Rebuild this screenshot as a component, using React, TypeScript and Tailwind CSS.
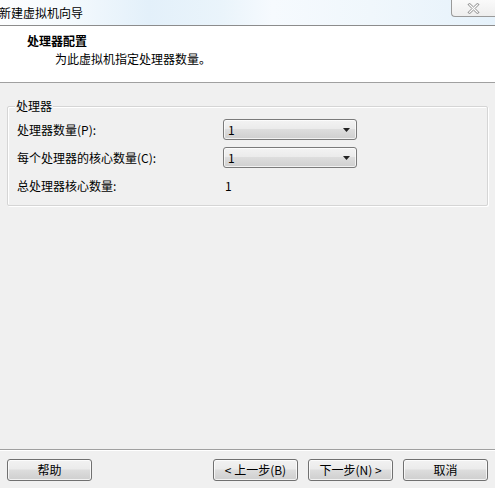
import React from "react";

const font = { fontFamily: '"Noto Sans CJK SC", "Liberation Sans", sans-serif' };

function Combo({ value }: { value: string }) {
  return (
    <div className="relative h-[21px] w-[134px] rounded-[3px] border border-[#7a7a7a] bg-[linear-gradient(180deg,#f3f3f3_0%,#ebebeb_45%,#dddddd_50%,#cfcfcf_100%)] flex items-center pl-[4px] pr-[6px] shadow-[inset_0_0_0_1px_rgba(255,255,255,0.7)]">
      <span className="flex-1 text-[12px] leading-none text-black">{value}</span>
      <svg width="7" height="4" viewBox="0 0 7 4">
        <path d="M0 0H7L3.5 4Z" fill="#222" />
      </svg>
    </div>
  );
}

function Btn({ children }: { children: React.ReactNode }) {
  return (
    <div className="h-[22px] w-[85px] rounded-[3px] border border-[#707070] bg-[linear-gradient(180deg,#f2f2f2_0%,#ebebeb_45%,#dddddd_50%,#cfcfcf_100%)] shadow-[inset_0_0_0_1px_rgba(255,255,255,0.75)] flex items-center justify-center text-[12px] leading-none text-black">
      {children}
    </div>
  );
}

export default function App() {
  return (
    <div className="w-[495px] h-[488px] flex flex-col bg-[#f0f0f0] overflow-hidden" style={font}>
      {/* title bar */}
      <div className="relative h-[26px] shrink-0 border-b border-[#8c8c8c] bg-[linear-gradient(90deg,#fdfeff_0%,#f3f9fd_15%,#e3f0fa_30%,#eaf4fb_45%,#f6fafe_55%,#f0f7fc_75%,#e6f2fb_100%)] flex items-center">
        <span className="text-[12px] leading-none text-black -ml-[1px]">新建虚拟机向导</span>
        <div className="absolute right-0 top-[-1px] h-[18px] w-[44px] rounded-bl-[4px] border border-[#9a9a9a] border-r-0 bg-[linear-gradient(180deg,#fafafa_0%,#eeeeee_100%)] flex items-center justify-center">
          <svg width="13" height="11" viewBox="0 0 13 11">
            <path
              d="M1 1.5L2.8 0.5L6.5 4L10.2 0.5L12 1.5L8 5.5L12 9.5L10.2 10.5L6.5 7L2.8 10.5L1 9.5L5 5.5Z"
              fill="#ffffff"
              stroke="#6b6b6b"
              strokeWidth="0.8"
              strokeLinejoin="round"
            />
          </svg>
        </div>
      </div>

      {/* header */}
      <div className="h-[57px] shrink-0 bg-white border-b border-[#a0a0a0] flex flex-col pl-[27px] pt-[9px] gap-[6px]">
        <span className="text-[12px] leading-[12px] font-bold text-black">处理器配置</span>
        <span className="text-[12px] leading-[12px] text-black pl-[28px]">为此虚拟机指定处理器数量。</span>
      </div>

      {/* body */}
      <div className="flex-1 pt-[23px] px-[7px]">
        <div className="relative border border-[#d5d5d5] shadow-[inset_1px_1px_0_#ffffff,1px_1px_0_#ffffff] rounded-[2px] pl-[9px] pt-[12px] pb-[9px]">
          <span className="absolute left-[7px] top-[-7px] bg-[#f0f0f0] px-[1px] text-[12px] leading-[12px] text-black">处理器</span>
          <div className="grid grid-cols-[206px_134px] gap-y-[7px] items-center">
            <span className="text-[12px] leading-none text-black">处理器数量(P):</span>
            <Combo value="1" />
            <span className="text-[12px] leading-none text-black">每个处理器的核心数量(C):</span>
            <Combo value="1" />
            <span className="h-[21px] flex items-center text-[12px] leading-none text-black">总处理器核心数量:</span>
            <span className="h-[21px] flex items-center pl-[2px] text-[12px] leading-none text-black">1</span>
          </div>
        </div>
      </div>

      {/* footer */}
      <div className="h-[39px] shrink-0 border-t border-[#a0a0a0] shadow-[inset_0_1px_0_#ffffff] flex items-start pt-[9px] px-[7px]">
        <Btn>帮助</Btn>
        <div className="flex-1" />
        <div className="flex gap-[10px]">
          <Btn>&lt; 上一步(B)</Btn>
          <Btn>下一步(N) &gt;</Btn>
          <Btn>取消</Btn>
        </div>
      </div>
    </div>
  );
}
